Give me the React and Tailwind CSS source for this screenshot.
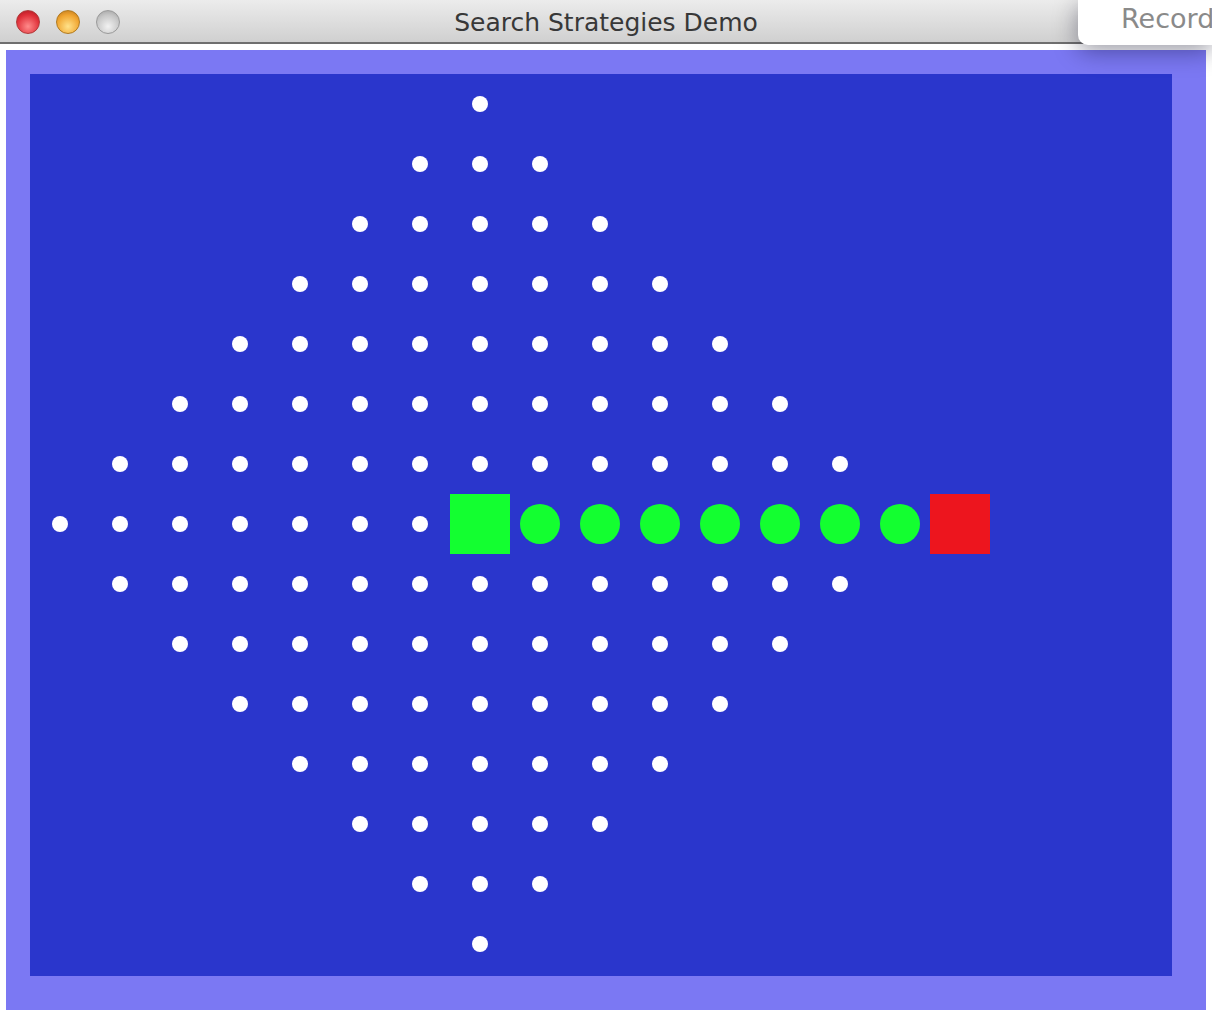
import React from "react";

const COLS = 19;
const ROWS = 15;

function cellContent(r, c) {
  const dx = c - 7;
  const dy = r - 7;
  if (r === 7 && c === 7) return "start";
  if (r === 7 && c === 15) return "goal";
  if (r === 7 && c >= 8 && c <= 14) return "path";
  if (Math.abs(dx) + Math.abs(dy) <= 7) return "dot";
  return null;
}

function Cell({ kind }) {
  return (
    <div className="w-[60px] h-[60px] flex items-center justify-center">
      {kind === "dot" && <div className="w-[16px] h-[16px] rounded-full bg-white" />}
      {kind === "path" && <div className="w-[40px] h-[40px] rounded-full bg-[#13ff30]" />}
      {kind === "start" && <div className="w-[60px] h-[60px] bg-[#13ff30]" />}
      {kind === "goal" && <div className="w-[60px] h-[60px] bg-[#ed151e]" />}
    </div>
  );
}

export default function App() {
  const cells = [];
  for (let r = 0; r < ROWS; r++) {
    for (let c = 0; c < COLS; c++) {
      cells.push(<Cell key={`${r}-${c}`} kind={cellContent(r, c)} />);
    }
  }
  return (
    <div className="relative w-[1212px] h-[1016px] bg-white overflow-hidden flex flex-col" style={{ fontFamily: '"DejaVu Sans", "Liberation Sans", sans-serif' }}>
      <div className="relative h-[44px] shrink-0 bg-gradient-to-b from-[#ececec] to-[#d0d0d0] border-b-2 border-[#6e6e6e] flex items-center">
        <div className="absolute left-[16px] top-[10px] flex gap-[16px]">
          <div className="w-[24px] h-[24px] rounded-full border border-[#b03a3a] bg-[radial-gradient(circle_at_50%_70%,#ff8b8b,#e0313a_60%,#a8121c)]" />
          <div className="w-[24px] h-[24px] rounded-full border border-[#b07a20] bg-[radial-gradient(circle_at_50%_70%,#ffe28a,#f0a530_60%,#b7701a)]" />
          <div className="w-[24px] h-[24px] rounded-full border border-[#9a9a9a] bg-[radial-gradient(circle_at_50%_70%,#f2f2f2,#c6c6c6_60%,#9c9c9c)]" />
        </div>
        <div className="w-full text-center text-[25px] leading-none text-[#383838] pt-[2px]">Search Strategies Demo</div>
      </div>
      <div className="flex-1 px-[6px] pt-[6px] pb-[6px] flex">
        <div className="flex-1 bg-[#7b78f3] p-[24px] pb-[34px] pr-[34px] flex">
          <div className="w-[1142px] h-[902px] bg-[#2a36cc] grid grid-cols-[repeat(19,60px)] grid-rows-[repeat(15,60px)] content-start">
            {cells}
          </div>
        </div>
      </div>
      <div className="absolute top-0 right-0 w-[134px] h-[45px] bg-white rounded-bl-[10px] shadow-[0_6px_24px_rgba(0,0,30,0.4)] pl-[43px] pt-[1px] text-[27px] text-[#8a8a8a] whitespace-nowrap leading-[36px]">
        Record
      </div>
    </div>
  );
}
